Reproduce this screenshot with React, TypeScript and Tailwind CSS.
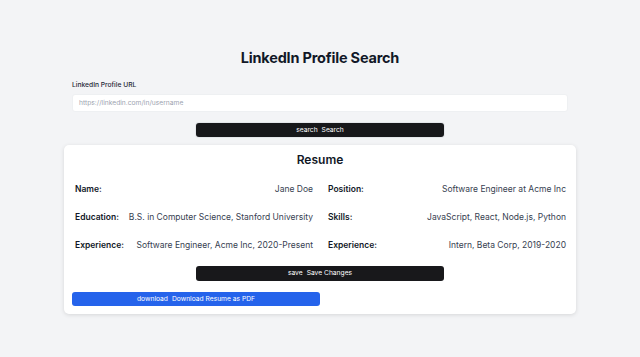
export default function App() {
  const rows = [
    ["Name:", "Jane Doe", "Position:", "Software Engineer at Acme Inc"],
    ["Education:", "B.S. in Computer Science, Stanford University", "Skills:", "JavaScript, React, Node.js, Python"],
    ["Experience:", "Software Engineer, Acme Inc, 2020-Present", "Experience:", "Intern, Beta Corp, 2019-2020"],
  ];

  return (
    <div className="min-h-[357px] w-full bg-[#f3f4f6] font-['Inter',sans-serif] text-[#111827]">
      <div className="mx-auto w-[512px] pt-[49px]">
        <h1 className="text-center text-[14.5px] font-bold leading-[18px] tracking-[-0.2px]">LinkedIn Profile Search</h1>
        <div className="mt-[13px] px-2">
          <label className="block text-[6.7px] font-medium leading-[10px] text-[#1f2937]">LinkedIn Profile URL</label>
          <div className="mt-[4px] flex h-[18px] items-center rounded-[3px] border border-[#eef0f2] bg-white px-[6px] text-[6.7px] text-[#9ca3af]">
            https://linkedin.com/in/username
          </div>
        </div>
        <div className="mt-[11px] flex justify-center">
          <button className="flex h-[14px] w-[248px] items-center justify-center gap-[4px] rounded-[3px] bg-[#18181b] text-[6.7px] text-white shadow-[0_0_0_1px_#e5e7eb]">
            <span>search</span>
            <span>Search</span>
          </button>
        </div>
        <div className="mt-[8px] rounded-[5px] bg-white px-2 pb-[8px] pt-[7px] shadow-[0_1px_4px_rgba(0,0,0,0.12)]">
          <h2 className="text-center text-[12px] font-semibold leading-[16px]">Resume</h2>
          <div className="mt-[14px] grid grid-cols-2 gap-x-[15px] gap-y-[14px] px-[3px] pr-[2px] text-[8.5px] leading-[14px]">
            {rows.map((r, i) => (
              <>
                <div key={`l${i}`} className="flex items-center justify-between gap-2 whitespace-nowrap">
                  <span className="font-semibold text-[#111827]">{r[0]}</span>
                  <span className="text-[#374151]">{r[1]}</span>
                </div>
                <div key={`r${i}`} className="flex items-center justify-between gap-2 whitespace-nowrap">
                  <span className="font-semibold text-[#111827]">{r[2]}</span>
                  <span className="text-[#374151]">{r[3]}</span>
                </div>
              </>
            ))}
          </div>
          <div className="mt-[14px] flex justify-center">
            <button className="flex h-[15px] w-[248px] items-center justify-center gap-[4px] rounded-[3px] bg-[#18181b] text-[6.7px] text-white">
              <span>save</span>
              <span>Save Changes</span>
            </button>
          </div>
          <div className="mt-[11px]">
            <button className="flex h-[14px] w-[248px] items-center justify-center gap-[4px] rounded-[3px] bg-[#2563eb] text-[6.7px] text-white">
              <span>download</span>
              <span>Download Resume as PDF</span>
            </button>
          </div>
        </div>
      </div>
    </div>
  );
}
